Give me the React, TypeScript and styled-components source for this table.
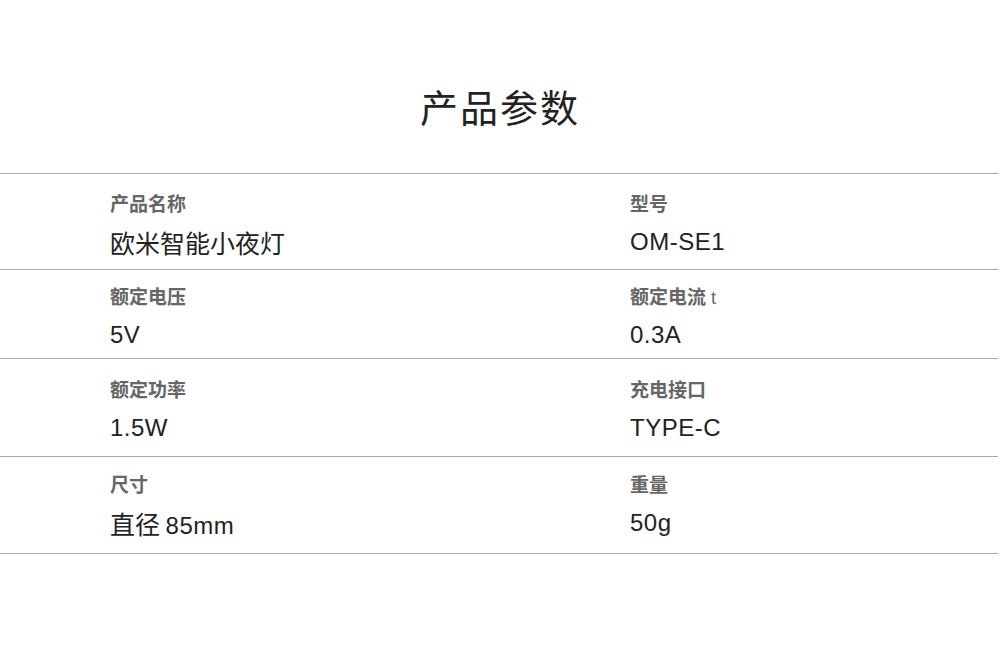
import React from "react";
import styled, { createGlobalStyle } from "styled-components";

const GlobalStyle = createGlobalStyle`
  html, body { margin: 0; padding: 0; background: #fff; }
  body { font-family: "Liberation Sans", "Noto Sans CJK SC", sans-serif; }
`;

const Page = styled.div`
  width: 1000px;
  height: 658px;
  background: #fff;
`;

const Title = styled.h1`
  margin: 0;
  padding-top: 87px;
  height: 86px;
  text-align: center;
  font-size: 38px;
  line-height: 38px;
  font-weight: 400;
  color: #222;
  font-family: "Noto Sans CJK SC", sans-serif;
  letter-spacing: 2px;
`;

const Table = styled.div`
  width: 998px;
  border-bottom: 1px solid #a8a8a8;
`;

const Row = styled.div<{ $pt: number; $pb: number }>`
  display: grid;
  grid-template-columns: 630px 1fr;
  border-top: 1px solid #a8a8a8;
  padding-top: ${(p) => p.$pt}px;
  padding-bottom: ${(p) => p.$pb}px;
`;

const Cell = styled.div<{ $left?: boolean }>`
  display: flex;
  flex-direction: column;
  gap: 15px;
  padding-left: ${(p) => (p.$left ? "110px" : "0")};
`;

const Label = styled.div`
  height: 20px;
  font-size: 19px;
  line-height: 20px;
  font-weight: 700;
  color: #666;
  font-family: "Noto Sans CJK SC", sans-serif;
  white-space: nowrap;
`;

const Thin = styled.span`
  font-weight: 400;
  font-size: 18px;
  line-height: 20px;
  font-family: "Liberation Sans", sans-serif;
  margin-left: 5px;
`;

const Value = styled.div`
  height: 28px;
  font-size: 24px;
  line-height: 28px;
  color: #222;
  font-family: "Liberation Sans", "Noto Sans CJK SC", sans-serif;
  white-space: nowrap;
`;

const Han = styled.span`
  font-size: 25px;
  font-family: "Noto Sans CJK SC", sans-serif;
`;

const Latin = styled.span`
  letter-spacing: 0.5px;
`;

type Spec = { label: string; han?: string; latin?: string; t?: boolean };

const rows: { pt: number; pb: number; a: Spec; b: Spec }[] = [
  { pt: 19, pb: 13, a: { label: "产品名称", han: "欧米智能小夜灯" }, b: { label: "型号", latin: "OM-SE1" } },
  { pt: 16, pb: 9, a: { label: "额定电压", latin: "5V" }, b: { label: "额定电流", latin: "0.3A", t: true } },
  { pt: 20, pb: 14, a: { label: "额定功率", latin: "1.5W" }, b: { label: "充电接口", latin: "TYPE-C" } },
  { pt: 17, pb: 16, a: { label: "尺寸", han: "直径 ", latin: "85mm" }, b: { label: "重量", latin: "50g" } },
];

function SpecCell({ s, left }: { s: Spec; left?: boolean }) {
  return (
    <Cell $left={left}>
      <Label>
        {s.label}
        {s.t && <Thin>t</Thin>}
      </Label>
      <Value>
        {s.han && <Han>{s.han}</Han>}
        {s.latin && <Latin>{s.latin}</Latin>}
      </Value>
    </Cell>
  );
}

export default function App() {
  return (
    <Page>
      <GlobalStyle />
      <Title>产品参数</Title>
      <Table>
        {rows.map((r, i) => (
          <Row key={i} $pt={r.pt} $pb={r.pb}>
            <SpecCell s={r.a} left />
            <SpecCell s={r.b} />
          </Row>
        ))}
      </Table>
    </Page>
  );
}
